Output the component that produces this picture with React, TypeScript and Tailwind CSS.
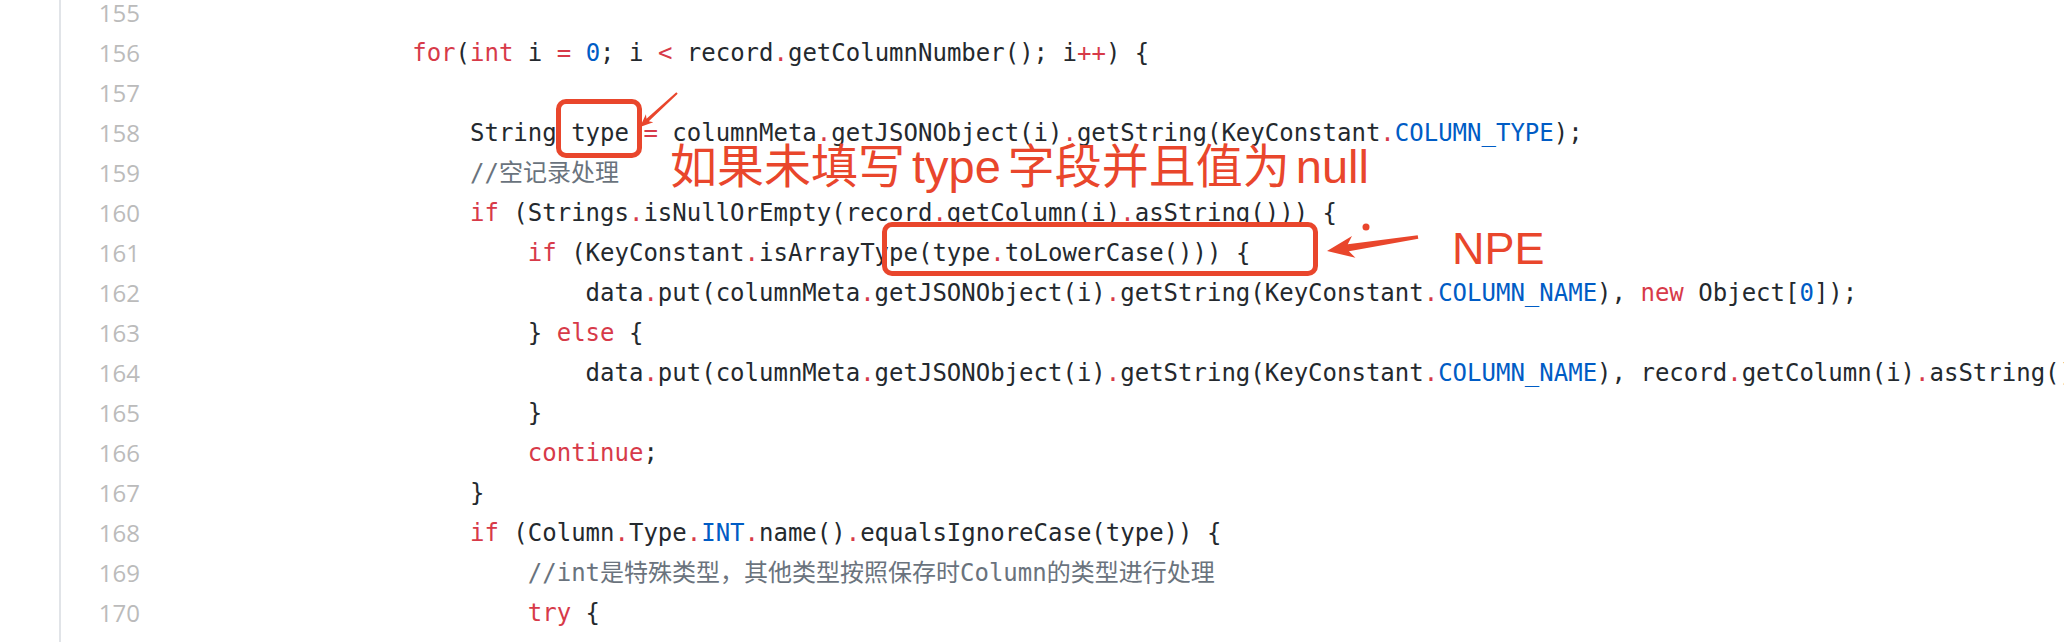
import React from "react";

const sp = (n: number) => " ".repeat(n);

const codeLines: [number, string][] = [
  [155, ""],
  [156, sp(16) + "for(int i = 0; i < record.getColumnNumber(); i++) {"],
  [157, ""],
  [158, sp(20) + "String type = columnMeta.getJSONObject(i).getString(KeyConstant.COLUMN_TYPE);"],
  [159, sp(20) + "//空记录处理"],
  [160, sp(20) + "if (Strings.isNullOrEmpty(record.getColumn(i).asString())) {"],
  [161, sp(24) + "if (KeyConstant.isArrayType(type.toLowerCase())) {"],
  [162, sp(28) + "data.put(columnMeta.getJSONObject(i).getString(KeyConstant.COLUMN_NAME), new Object[0]);"],
  [163, sp(24) + "} else {"],
  [164, sp(28) + "data.put(columnMeta.getJSONObject(i).getString(KeyConstant.COLUMN_NAME), record.getColumn(i).asString());"],
  [165, sp(24) + "}"],
  [166, sp(24) + "continue;"],
  [167, sp(20) + "}"],
  [168, sp(20) + "if (Column.Type.INT.name().equalsIgnoreCase(type)) {"],
  [169, sp(24) + "//int是特殊类型，其他类型按照保存时Column的类型进行处理"],
  [170, sp(24) + "try {"],
  [171, sp(28) + "data.put(columnMeta.getJSONObject(i).getString(KeyConstant.COLUMN_NAME), record.getColumn(i).asLong());"],
];

const KEYWORDS = new Set(["for", "int", "if", "else", "new", "continue", "try"]);
const RED = "text-[#d73a49]";
const BLUE = "text-[#005cc5]";
const GRAY = "text-[#6a737d]";
const DARK = "text-[#24292e]";

function tokenize(line: string) {
  const re = /(\/\/.*$)|([A-Za-z_][A-Za-z0-9_]*)|(\d+)|(\+\+|[=<.])|(\s+)|(.)/g;
  const out: { t: string; c: string }[] = [];
  let m: RegExpExecArray | null;
  while ((m = re.exec(line)) !== null) {
    if (m[1]) out.push({ t: m[1], c: GRAY });
    else if (m[2]) {
      const w = m[2];
      if (KEYWORDS.has(w)) out.push({ t: w, c: RED });
      else if (/^[A-Z][A-Z0-9_]+$/.test(w)) out.push({ t: w, c: BLUE });
      else out.push({ t: w, c: DARK });
    } else if (m[3]) out.push({ t: m[3], c: BLUE });
    else if (m[4]) out.push({ t: m[4], c: RED });
    else if (m[5]) out.push({ t: m[5], c: DARK });
    else if (m[6]) out.push({ t: m[6], c: DARK });
  }
  return out;
}

function arrowPoints(
  tx: number,
  ty: number,
  px: number,
  py: number,
  tailW: number,
  shaftW: number,
  headLen: number,
  headW: number
) {
  const dx = px - tx;
  const dy = py - ty;
  const L = Math.hypot(dx, dy);
  const ux = dx / L;
  const uy = dy / L;
  const nx = -uy;
  const ny = ux;
  const bx = px - ux * headLen;
  const by = py - uy * headLen;
  const bx2 = px - ux * headLen * 0.8;
  const by2 = py - uy * headLen * 0.8;
  const pts = [
    [tx + (nx * tailW) / 2, ty + (ny * tailW) / 2],
    [bx2 + (nx * shaftW) / 2, by2 + (ny * shaftW) / 2],
    [bx + (nx * headW) / 2, by + (ny * headW) / 2],
    [px, py],
    [bx - (nx * headW) / 2, by - (ny * headW) / 2],
    [bx2 - (nx * shaftW) / 2, by2 - (ny * shaftW) / 2],
    [tx - (nx * tailW) / 2, ty - (ny * tailW) / 2],
  ];
  return pts.map((p) => `${p[0].toFixed(1)},${p[1].toFixed(1)}`).join(" ");
}

export default function App() {
  return (
    <div className="relative w-[2064px] h-[642px] overflow-hidden bg-white">
      <div className="ml-[59px] -mt-[7px] border-l-2 border-[#e1e4e8] pb-[40px]">
        {codeLines.map(([n, text]) => (
          <div key={n} className="flex h-[40px] items-center">
            <div
              className="w-[101px] shrink-0 pr-[22px] text-right text-[24px] leading-[40px] text-[#bbbbbb]"
              style={{ fontFamily: '"Open Sans", sans-serif' }}
            >
              {n}
            </div>
            <div
              className="pl-[19px] whitespace-pre text-[24px] leading-[40px]"
              style={{ fontFamily: '"DejaVu Sans Mono", "Noto Sans CJK SC", monospace' }}
            >
              {tokenize(text).map((tok, i) => (
                <span key={i} className={tok.c}>
                  {tok.t}
                </span>
              ))}
            </div>
          </div>
        ))}
      </div>

      {/* annotation boxes */}
      <div className="absolute left-[556px] top-[99px] w-[86px] h-[59px] rounded-[10px] border-[5px] border-[#e9462c]" />
      <div className="absolute left-[882px] top-[222px] w-[436px] h-[54px] rounded-[10px] border-[5px] border-[#e9462c]" />

      {/* annotation texts */}
      <div
        className="absolute left-[670px] top-[143px] flex items-baseline whitespace-pre text-[47px] leading-[47px] text-[#e9462c]"
        style={{ fontFamily: '"Liberation Sans", "Noto Sans CJK SC", sans-serif' }}
      >
        <span>如果未填写</span>
        <span className="mx-[7px]">type</span>
        <span>字段并且值为</span>
        <span className="ml-[6px]">null</span>
      </div>
      <div
        className="absolute left-[1452px] top-[226px] text-[45px] leading-[45px] text-[#e9462c]"
        style={{ fontFamily: '"Liberation Sans", sans-serif' }}
      >
        NPE
      </div>

      {/* arrows */}
      <svg className="pointer-events-none absolute left-0 top-0" width="2064" height="642">
        <polygon points={arrowPoints(677, 93, 640, 127, 2, 3.5, 13, 11)} fill="#e9462c" />
        <polygon points={arrowPoints(1418, 237, 1327, 251, 3.5, 7, 27, 22)} fill="#e9462c" />
        <circle cx="1366" cy="227" r="3.5" fill="#e9462c" />
      </svg>
    </div>
  );
}
